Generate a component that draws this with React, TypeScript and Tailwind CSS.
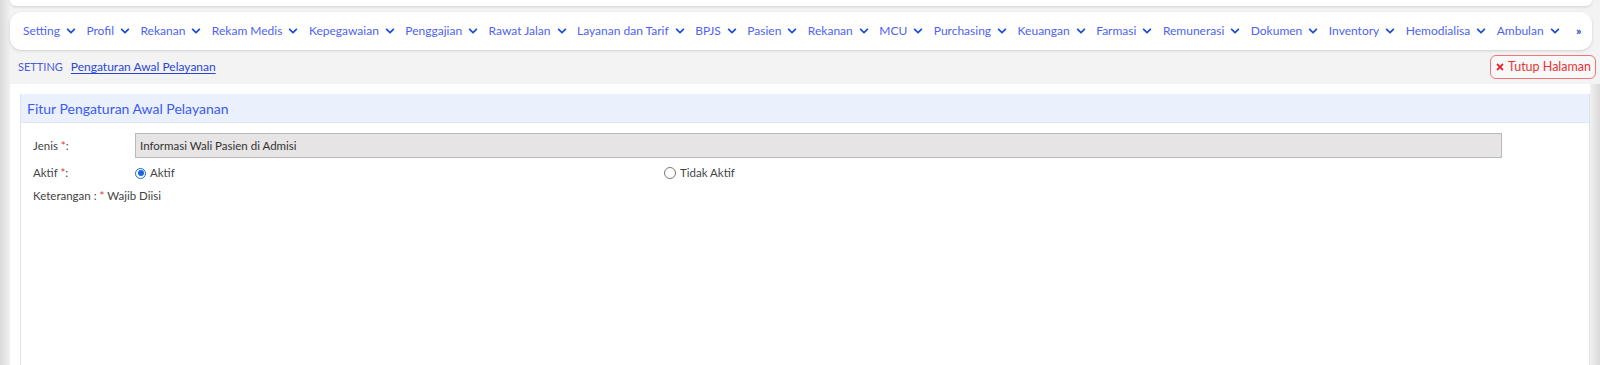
import { FaChevronDown, FaTimes } from "react-icons/fa";

const menus = [
  "Setting", "Profil", "Rekanan", "Rekam Medis", "Kepegawaian", "Penggajian", "Rawat Jalan",
  "Layanan dan Tarif", "BPJS", "Pasien", "Rekanan", "MCU", "Purchasing", "Keuangan", "Farmasi",
  "Remunerasi", "Dokumen", "Inventory", "Hemodialisa", "Ambulan",
];

const Radio = ({ checked, label }: { checked?: boolean; label: string }) => (
  <label className="flex items-center gap-[4px]">
    {checked ? (
      <span className="w-[11px] h-[11px] rounded-full border-[1.5px] border-[#1a66d8] flex items-center justify-center">
        <span className="w-[6px] h-[6px] rounded-full bg-[#1a66d8]" />
      </span>
    ) : (
      <span className="w-[12px] h-[12px] rounded-full border border-[#777]" />
    )}
    <span className="text-[11.5px] text-[#444] whitespace-nowrap">{label}</span>
  </label>
);

export default function App() {
  return (
    <div className="w-[1600px] h-[365px] overflow-hidden bg-[#f3f3f3] flex font-['Lato',sans-serif]">
      <div className="w-[10px] shrink-0 bg-gradient-to-r from-[#d9d9d9] to-[#f1f1f1]" />
      <div className="flex-1 flex flex-col">
        <div className="h-[6px] w-[1582px] bg-white rounded-b-xl shadow-[0_1px_3px_rgba(0,0,0,0.15)]" />
        <nav className="mt-[6px] h-[38px] w-[1582px] bg-white rounded-xl shadow-[0_1px_3px_rgba(0,0,0,0.15)] flex items-center pl-[13px] whitespace-nowrap">
          {menus.map((m, i) => (
            <div key={i} className="flex items-center mr-[10.5px] shrink-0">
              <span className="text-[12px] text-[#4f63f0]">{m}</span>
              <FaChevronDown className="ml-[6px] w-[10px] h-[10px] text-[#1747d4]" />
            </div>
          ))}
          <span className="ml-[6px] text-[12px] font-bold text-[#2f44c8]">»</span>
        </nav>
        <div className="h-[34px] flex items-center justify-between pl-[8px] pr-[4px]">
          <div className="flex items-center gap-[8px]">
            <span className="text-[11px] text-[#4a5cd8]">SETTING</span>
            <span className="text-[12px] text-[#2a46d6] underline underline-offset-2">Pengaturan Awal Pelayanan</span>
          </div>
          <button className="h-[24px] px-[4px] border border-[#f07575] rounded-md flex items-center gap-[3px] bg-white/40 whitespace-nowrap">
            <FaTimes className="w-[10px] h-[10px] text-[#e8202a]" />
            <span className="text-[12.5px] text-[#e53535]">Tutup Halaman</span>
          </button>
        </div>
        <div className="flex flex-1">
          <div className="flex-1 bg-white pt-[10px] pl-[10px]">
            <div className="h-full border-l border-r border-[#dde3ee]">
              <div className="h-[29px] bg-[#eaf1fd] border-b border-[#dbe3f0] flex items-center pl-[6px]">
                <span className="text-[14px] text-[#3d5af1]">Fitur Pengaturan Awal Pelayanan</span>
              </div>
              <div className="pt-[10px] pl-[12px]">
                <div className="flex items-start">
                  <div className="w-[102px] pt-[4px] text-[11.5px] text-[#444]">
                    Jenis <span className="text-[#e53535]">*</span>:
                  </div>
                  <div className="w-[1367px] h-[25px] bg-[#e6e4e4] border border-[#b9b9bd] flex items-center pl-[4px] text-[11.5px] text-[#333]">
                    Informasi Wali Pasien di Admisi
                  </div>
                </div>
                <div className="flex items-center mt-[7px] h-[16px]">
                  <div className="w-[102px] text-[11.5px] text-[#444]">
                    Aktif <span className="text-[#e53535]">*</span>:
                  </div>
                  <div className="w-[529px]">
                    <Radio checked label="Aktif" />
                  </div>
                  <Radio label="Tidak Aktif" />
                </div>
                <div className="mt-[6px] text-[11.5px] text-[#444]">
                  Keterangan : <span className="text-[#e53535]">*</span> Wajib Diisi
                </div>
              </div>
            </div>
          </div>
          <div className="w-[10px] shrink-0 bg-gradient-to-r from-[#f1f1f1] to-[#d9d9d9]" />
        </div>
      </div>
    </div>
  );
}
